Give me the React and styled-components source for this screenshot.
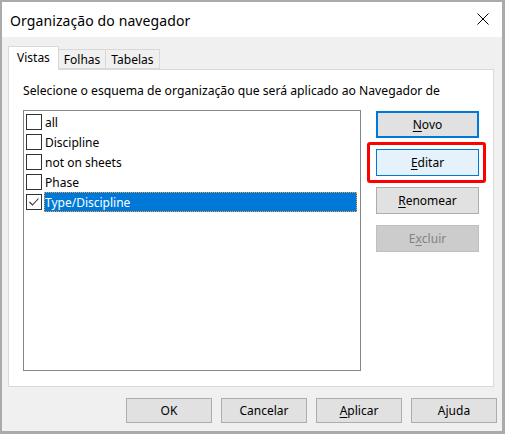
import React from "react";
import styled, { createGlobalStyle } from "styled-components";

const Global = createGlobalStyle`
  html, body { margin: 0; padding: 0; background: #ffffff; }
  * { box-sizing: border-box; }
  body { font-family: "Segoe UI", "Noto Sans", "Liberation Sans", sans-serif; }
`;

const FONT = `"Segoe UI", "Noto Sans", "Liberation Sans", sans-serif`;

const Window = styled.div`
  width: 505px;
  height: 434px;
  border-style: solid;
  border-color: #aaaaaa;
  border-width: 2px 3px 3px 2px;
  background: #f0f0f0;
  display: flex;
  flex-direction: column;
  font-family: ${FONT};
  color: #000;
`;

const TitleBar = styled.div`
  height: 35px;
  background: #ffffff;
  display: flex;
  align-items: center;
  justify-content: space-between;
  padding: 0 13px 0 8px;
`;

const Title = styled.span`
  font-size: 14px;
  margin-top: 1px;
  letter-spacing: 0.1px;
`;

const CloseIcon = styled.svg`
  width: 12px;
  height: 12px;
  display: block;
  margin-top: -2px;
`;

const Body = styled.div`
  flex: 1;
  display: flex;
  flex-direction: column;
  padding: 9px 8px 8px 6px;
`;

const TabStrip = styled.div`
  display: flex;
  align-items: flex-end;
  height: 23px;
  position: relative;
  z-index: 1;
`;

const Tab = styled.div`
  font-size: 12px;
  display: flex;
  align-items: center;
  border: 1px solid #d9d9d9;
  border-left-width: ${(p) => (p.$first ? "1px" : "0")};
  background: ${(p) => (p.$active ? "#ffffff" : "#f0f0f0")};
  height: ${(p) => (p.$active ? "24px" : "20px")};
  margin-bottom: ${(p) => (p.$active ? "-1px" : "0")};
  border-bottom: ${(p) => (p.$active ? "none" : "1px solid #d9d9d9")};
  padding: ${(p) => (p.$active ? "1px 8px 3px" : "1px 5px 0")};
`;

const Panel = styled.div`
  height: 318px;
  background: #ffffff;
  border: 1px solid #d9d9d9;
  padding: 13px 14px 0 14px;
  display: flex;
  flex-direction: column;
`;

const Prompt = styled.div`
  font-size: 12.2px;
  line-height: 16px;
  white-space: nowrap;
`;

const PanelRow = styled.div`
  display: flex;
  margin-top: 11px;
  gap: 15px;
`;

const ListBox = styled.div`
  width: 339px;
  height: 261px;
  border: 1px solid #828790;
  background: #fff;
  padding: 1px 3px 0 2px;
  display: flex;
  flex-direction: column;
`;

const Row = styled.div`
  height: 20px;
  display: flex;
  align-items: center;
  font-size: 12px;
`;

const Box = styled.div`
  width: 16px;
  height: 16px;
  border: 1px solid #333333;
  background: #fff;
  display: flex;
  align-items: center;
  justify-content: center;
  flex: none;
`;

const Label = styled.div`
  margin-left: 2px;
  height: 20px;
  line-height: 21px;
  padding: 0 1px;
  flex: ${(p) => (p.$selected ? "1" : "none")};
  background: ${(p) => (p.$selected ? "#0078d7" : "transparent")};
  color: ${(p) => (p.$selected ? "#ffffff" : "#000000")};
  outline: ${(p) => (p.$selected ? "1px dotted #f7a134" : "none")};
  outline-offset: -1px;
`;

const ButtonColumn = styled.div`
  display: flex;
  flex-direction: column;
  gap: 11px;
  padding-top: 1px;
`;

const Highlight = styled.div`
  position: relative;
  &::after {
    content: "";
    position: absolute;
    top: -7px;
    bottom: -7px;
    left: -9px;
    right: -7px;
    border: 3px solid #ff0000;
    border-radius: 3px;
    pointer-events: none;
  }
`;

const variants = {
  default: { bg: "#e1e1e1", border: "2px solid #0078d7", color: "#000" },
  hover: { bg: "#e5f1fb", border: "1px solid #0078d7", color: "#000" },
  normal: { bg: "#e1e1e1", border: "1px solid #adadad", color: "#000" },
  disabled: { bg: "#cccccc", border: "1px solid #bfbfbf", color: "#838383" },
};

const Button = styled.button`
  font-family: ${FONT};
  font-size: 12px;
  width: ${(p) => p.$w || 103}px;
  height: ${(p) => p.$h || 27}px;
  padding: 0;
  margin: 0;
  display: flex;
  align-items: center;
  justify-content: center;
  background: ${(p) => variants[p.$v || "normal"].bg};
  border: ${(p) => variants[p.$v || "normal"].border};
  color: ${(p) => variants[p.$v || "normal"].color};
  border-radius: 0;
`;

const Key = styled.span`
  text-decoration: underline;
  text-underline-offset: 2px;
`;

const Footer = styled.div`
  display: flex;
  justify-content: flex-end;
  gap: 9px;
  margin-top: 11px;
  margin-right: -3px;
`;

const Check = () => (
  <svg width="12" height="12" viewBox="0 0 12 12">
    <polyline points="1.5,6 4.5,9 10.5,2.5" fill="none" stroke="#333" strokeWidth="1.1" />
  </svg>
);

const items = [
  { name: "all" },
  { name: "Discipline" },
  { name: "not on sheets" },
  { name: "Phase" },
  { name: "Type/Discipline", checked: true, selected: true },
];

export default function App() {
  return (
    <>
      <Global />
      <Window>
        <TitleBar>
          <Title>Organização do navegador</Title>
          <CloseIcon viewBox="0 0 12 12">
            <path d="M0.5 0.5 L11.5 11.5 M11.5 0.5 L0.5 11.5" stroke="#000" strokeWidth="1" />
          </CloseIcon>
        </TitleBar>
        <Body>
          <TabStrip>
            <Tab $active $first>Vistas</Tab>
            <Tab>Folhas</Tab>
            <Tab>Tabelas</Tab>
          </TabStrip>
          <Panel>
            <Prompt>Selecione o esquema de organização que será aplicado ao Navegador de</Prompt>
            <PanelRow>
              <ListBox>
                {items.map((it) => (
                  <Row key={it.name}>
                    <Box>{it.checked && <Check />}</Box>
                    <Label $selected={it.selected}>{it.name}</Label>
                  </Row>
                ))}
              </ListBox>
              <ButtonColumn>
                <Button $v="default">
                  <Key>N</Key>ovo
                </Button>
                <Highlight>
                  <Button $v="hover">
                    <Key>E</Key>ditar
                  </Button>
                </Highlight>
                <Button $v="normal">
                  <Key>R</Key>enomear
                </Button>
                <Button $v="disabled" disabled>
                  E<Key>x</Key>cluir
                </Button>
              </ButtonColumn>
            </PanelRow>
          </Panel>
          <Footer>
            <Button $w={86} $h={25}>OK</Button>
            <Button $w={86} $h={25}>Cancelar</Button>
            <Button $w={86} $h={25}>
              <Key>A</Key>plicar
            </Button>
            <Button $w={86} $h={25}>Ajuda</Button>
          </Footer>
        </Body>
      </Window>
    </>
  );
}
